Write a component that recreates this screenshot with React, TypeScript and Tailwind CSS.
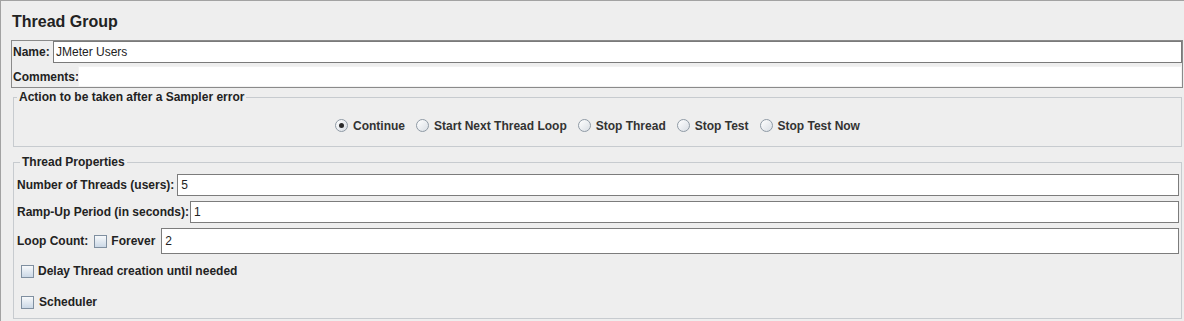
import React from "react";

const font = "font-['Liberation_Sans','Arial',sans-serif]";

function Radio({ checked, label }: { checked?: boolean; label: string }) {
  return (
    <div className="flex items-center gap-[5px]">
      <div className="w-[13px] h-[13px] rounded-full border border-[#8f9aa5] bg-gradient-to-br from-[#ffffff] to-[#d9dee4] flex items-center justify-center">
        {checked && <div className="w-[5px] h-[5px] rounded-full bg-[#2a2a2a]" />}
      </div>
      <span className="text-[12px] font-bold text-[#333333] leading-[14px]">{label}</span>
    </div>
  );
}

function Check() {
  return (
    <div className="w-[13px] h-[13px] border border-[#7f8fa0] bg-gradient-to-b from-[#f7f9fb] to-[#cbd8e6]" />
  );
}

function Field({ value, tall }: { value: string; tall?: boolean }) {
  return (
    <div
      className={`flex-1 ${tall ? "h-[26px]" : "h-[22px]"} bg-white border border-[#7c7c7c] flex items-center pl-[3px] text-[12px] font-normal text-[#222222]`}
    >
      {value}
    </div>
  );
}

export default function App() {
  return (
    <div className={`w-[1184px] h-[321px] bg-[#eeeeee] border-t border-l border-[#a2a2a2] overflow-hidden ${font}`}>
      <div className="ml-[11px] mt-[11px] h-[19px] text-[16px] font-bold leading-[19px] text-[#222222]">
        Thread Group
      </div>

      <div className="ml-[10px] mr-[1px] mt-[9px] h-[48px] border border-[#8a8a8a] flex flex-col">
        <div className="flex items-center h-[22px]">
          <span className="pl-[1px] w-[41px] text-[12px] font-bold text-[#222222]">Name:</span>
          <div className="flex-1 h-[22px] bg-white border border-[#7a7a7a] flex items-center pl-[2px] text-[12px] text-[#222222]">
            JMeter Users
          </div>
        </div>
        <div className="flex items-center mt-[3px] h-[21px]">
          <span className="pl-[1px] w-[66px] text-[12px] font-bold text-[#222222]">Comments:</span>
          <div className="flex-1 h-[21px] bg-white border border-[#f2f2f2]" />
        </div>
      </div>

      <fieldset className="ml-[12px] mr-[2px] mt-[2px] border border-[#c7cbcf] pb-[12px]">
        <legend className="ml-[3px] px-[2px] text-[12px] font-bold leading-[14px] text-[#222222]">
          Action to be taken after a Sampler error
        </legend>
        <div className="flex justify-center gap-[11px] pt-[14px] pb-[1px] h-[30px]">
          <Radio checked label="Continue" />
          <Radio label="Start Next Thread Loop" />
          <Radio label="Stop Thread" />
          <Radio label="Stop Test" />
          <Radio label="Stop Test Now" />
        </div>
      </fieldset>

      <fieldset className="ml-[12px] mr-[2px] mt-[8px] border border-[#c7cbcf] pl-[3px] pr-[2px] pb-[6px]">
        <legend className="ml-[3px] px-[2px] text-[12px] font-bold leading-[14px] text-[#222222]">
          Thread Properties
        </legend>
        <div className="flex flex-col text-[12px] font-bold text-[#222222]">
          <div className="flex items-center gap-[3px] mt-[5px]">
            <span>Number of Threads (users):</span>
            <Field value="5" />
          </div>
          <div className="flex items-center gap-[1px] mt-[5px]">
            <span>Ramp-Up Period (in seconds):</span>
            <Field value="1" />
          </div>
          <div className="flex items-center mt-[5px]">
            <span>Loop Count:</span>
            <div className="ml-[6px]">
              <Check />
            </div>
            <span className="ml-[4px]">Forever</span>
            <div className="ml-[6px] flex-1 flex">
              <Field value="2" tall />
            </div>
          </div>
          <div className="flex items-center h-[20px] mt-[7px] pl-[4px] gap-[4px]">
            <Check />
            <span>Delay Thread creation until needed</span>
          </div>
          <div className="flex items-center h-[20px] mt-[11px] pl-[4px] gap-[5px]">
            <Check />
            <span>Scheduler</span>
          </div>
        </div>
      </fieldset>
    </div>
  );
}
